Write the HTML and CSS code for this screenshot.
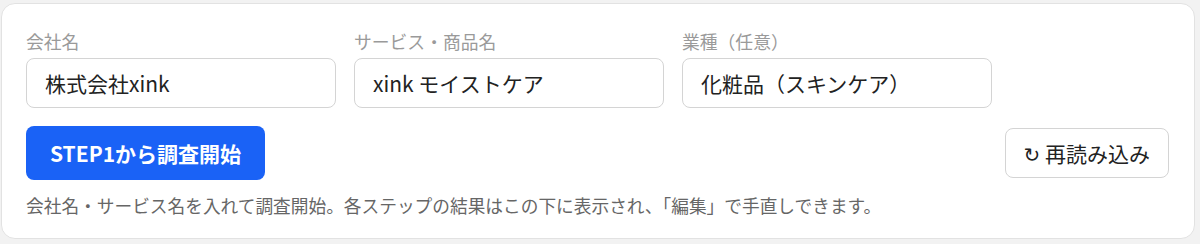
FILE: index.html
```html
<html>
  <head>
    <meta name='viewport' content='width=device-width, initial-scale=1.0'>
    <title>調査開始</title>
    <link rel="stylesheet" href="styles.css">
  </head>
  <body>
    <div class="card">
      <div class="fields">
        <div class="field">
          <label class="label" for="txtCompany">会社名</label>
          <input id="txtCompany" class="input" type="text" value="株式会社xink">
        </div>
        <div class="field">
          <label class="label" for="txtService">サービス・商品名</label>
          <input id="txtService" class="input" type="text" value="xink モイストケア">
        </div>
        <div class="field">
          <label class="label" for="txtIndustry">業種（任意）</label>
          <input id="txtIndustry" class="input" type="text" value="化粧品（スキンケア）">
        </div>
      </div>
      <div class="actions">
        <button class="btn-primary">STEP1から調査開始</button>
        <button class="btn-reload"><span class="reload-icon">↻</span> 再読み込み</button>
      </div>
      <p class="hint">会社名・サービス名を入れて調査開始。各ステップの結果はこの下に表示され、「編集」で手直しできます。</p>
    </div>
  </body>
</html>
```

FILE: styles.css
```css
* {
  margin: 0;
  padding: 0;
  box-sizing: border-box;
}

html, body {
  width: 100%;
  height: 100%;
}

body {
  background: #f2f2f2;
  font-family: "Noto Sans CJK JP", "Noto Sans", sans-serif;
  padding: 3px 5px 0 1px;
}

.card {
  background: #fff;
  border: 1px solid #e2e2e2;
  border-radius: 14px;
  height: 236px;
  padding: 25px 25px 0 24px;
}

.fields {
  display: flex;
  gap: 18px;
}

.field {
  display: flex;
  flex-direction: column;
  width: 310px;
}

.label {
  font-size: 17.8px;
  line-height: 24px;
  color: #9a9a9a;
  margin-bottom: 5px;
}

.input {
  height: 50px;
  border: 1px solid #d4d4d4;
  border-radius: 8px;
  padding: 0 18px;
  font-family: inherit;
  font-size: 21px;
  color: #222;
  outline: none;
}

.actions {
  display: flex;
  justify-content: space-between;
  align-items: center;
  margin-top: 18px;
}

.btn-primary {
  height: 54px;
  padding: 0 24px;
  border: none;
  border-radius: 8px;
  background: #1a62f6;
  color: #fff;
  font-family: inherit;
  font-size: 21px;
  font-weight: bold;
}

.btn-reload {
  height: 50px;
  padding: 0 18px;
  border: 1px solid #d4d4d4;
  border-radius: 8px;
  background: #fff;
  color: #222;
  font-family: inherit;
  font-size: 21px;
}

.reload-icon {
  font-family: "DejaVu Sans", sans-serif;
  font-size: 20px;
}

.hint {
  margin-top: 12px;
  font-size: 17.7px;
  line-height: 26px;
  color: #666;
}
```
